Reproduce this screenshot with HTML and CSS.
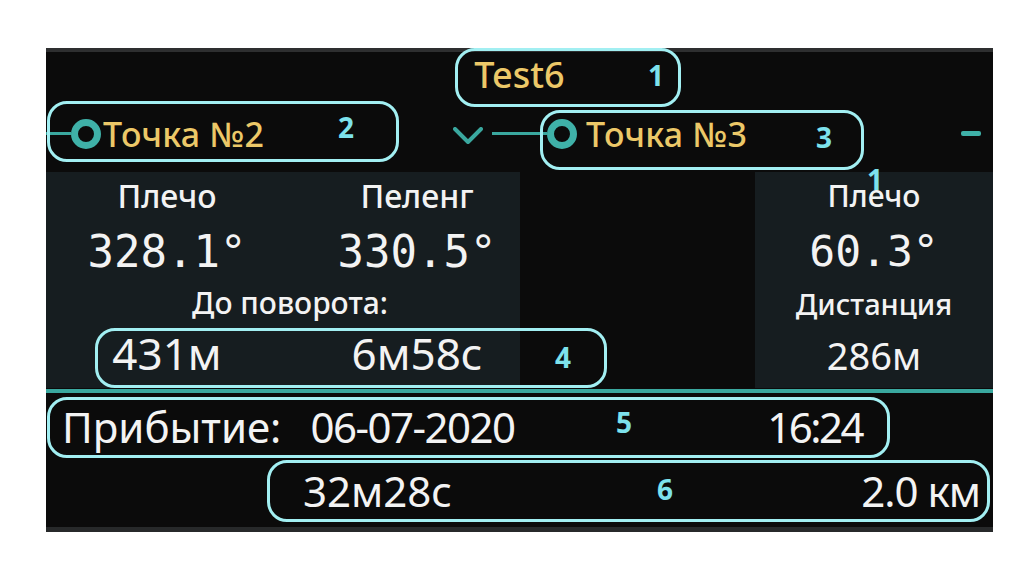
FILE: index.html
```html
<!DOCTYPE html>
<html lang="ru">
<head>
<meta charset="utf-8">
<title>Test6</title>
<link rel="stylesheet" href="styles.css">
</head>
<body>
<div class="stage">
  <div class="panel">
    <div class="title">Test6</div>
    <div class="route">
      <div class="route-left">
        <span class="tail"></span>
        <span class="ring"></span>
        <span class="point">Точка №2</span>
      </div>
      <svg class="chevron" width="30" height="18" viewBox="0 0 30 18"><polyline points="2,2 15,15 28,2" fill="none" stroke="#3aa89f" stroke-width="4" stroke-linecap="round" stroke-linejoin="round"/></svg>
      <span class="link"></span>
      <span class="ring"></span>
      <span class="point point-next">Точка №3</span>
      <span class="dash"></span>
    </div>
    <div class="info">
      <div class="card card-left">
        <div class="label">Плечо</div>
        <div class="label c2">Пеленг</div>
        <div class="deg">328.1°</div>
        <div class="deg c2">330.5°</div>
        <div class="sub">До поворота:</div>
        <div class="big">431м</div>
        <div class="big c2">6м58с</div>
      </div>
      <div class="void"></div>
      <div class="card card-right">
        <div class="label small">Плечо</div>
        <div class="deg small">60.3°</div>
        <div class="sub">Дистанция</div>
        <div class="mid">286м</div>
      </div>
    </div>
    <div class="divider"></div>
    <div class="arrival">
      <span>Прибытие:</span>
      <span class="date">06-07-2020</span>
      <span class="time">16:24</span>
    </div>
    <div class="total">
      <span class="dur">32м28с</span>
      <span class="dist">2.0 км</span>
    </div>
  </div>

  <div class="box b1"></div>
  <div class="box b2"></div>
  <div class="box b3"></div>
  <div class="box b4"></div>
  <div class="box b5"></div>
  <div class="box b6"></div>

  <span class="num n1">1</span>
  <span class="num n2">2</span>
  <span class="num n3">3</span>
  <span class="num n1b">1</span>
  <span class="num n4">4</span>
  <span class="num n5">5</span>
  <span class="num n6">6</span>
</div>
</body>
</html>
```

FILE: styles.css
```css
* { box-sizing: border-box; }

html, body {
  margin: 0;
  padding: 0;
  background: #ffffff;
}

body {
  font-family: "Noto Sans", "Open Sans", sans-serif;
  color: #f3f3f3;
}

.stage {
  position: relative;
  width: 1022px;
  height: 566px;
  padding: 48px 0 0 46px;
  overflow: hidden;
}

.panel {
  width: 947px;
  height: 484px;
  background: #0b0b0b;
  border-top: 4px solid #2e2f30;
  border-bottom: 5px solid #27292a;
  display: flex;
  flex-direction: column;
}

.title {
  padding-top: 3px;
  height: 43px;
  line-height: 40px;
  font-size: 36px;
  font-weight: 500;
  text-align: center;
  color: #ecc868;
}

.route {
  height: 77px;
  display: flex;
  align-items: center;
}

.route-left {
  width: 407px;
  display: flex;
  align-items: center;
}

.tail {
  width: 25px;
  height: 3px;
  background: #3aa89f;
}

.ring {
  width: 30px;
  height: 30px;
  border: 7px solid #3fb1a8;
  border-radius: 50%;
  flex: none;
}

.point {
  margin-left: 2px;
  font-size: 34px;
  font-weight: 500;
  letter-spacing: 0.3px;
  line-height: 40px;
  color: #ecc868;
  white-space: nowrap;
}

.point-next {
  margin-left: 9px;
}

.chevron {
  display: block;
  flex: none;
  margin-top: 4px;
}

.link {
  margin-left: 9px;
  width: 55px;
  height: 3px;
  background: #3aa89f;
}

.dash {
  margin-left: auto;
  margin-right: 12px;
  width: 20px;
  height: 5px;
  border-radius: 2px;
  background: #3fb1a8;
}

.info {
  height: 216px;
  display: flex;
}

.card {
  background: #161d20;
  height: 100%;
}

.card-left {
  width: 474px;
  display: grid;
  grid-template-columns: 242px 232px;
  grid-auto-rows: min-content;
  justify-items: center;
  padding-top: 5px;
}

.card-left .c2 {
  padding-left: 26px;
}

.void {
  flex: 1;
}

.card-right {
  width: 238px;
  display: flex;
  flex-direction: column;
  align-items: center;
  padding-top: 6px;
}

.label {
  font-size: 32px;
  font-weight: 500;
  line-height: 38px;
}

.label.small {
  font-size: 30px;
  line-height: 36px;
}

.deg {
  margin-top: 14px;
  font-family: "DejaVu Sans Mono", "Liberation Mono", monospace;
  font-size: 44px;
  line-height: 46px;
}

.deg.small {
  margin-top: 14px;
  font-size: 43px;
}

.sub {
  grid-column: 1 / 3;
  margin-top: 10px;
  padding-left: 14px;
  font-size: 30px;
  font-weight: 500;
  line-height: 36px;
}

.card-right .sub {
  padding-left: 0;
  font-size: 29px;
  margin-top: 12px;
}

.big {
  margin-top: 8px;
  font-size: 44px;
  line-height: 48px;
}

.mid {
  margin-top: 12px;
  font-size: 38px;
  line-height: 42px;
}

.divider {
  margin-top: 1px;
  height: 4px;
  background: #3aa89f;
}

.arrival {
  height: 67px;
  display: flex;
  padding: 9px 131px 0 16px;
  font-size: 42px;
  line-height: 50px;
}

.date {
  margin-left: 29px;
  letter-spacing: -1.5px;
}

.time {
  margin-left: auto;
  letter-spacing: -2.5px;
}

.total {
  height: 67px;
  display: flex;
  justify-content: space-between;
  padding: 6px 13px 0 257px;
  font-size: 42px;
  line-height: 50px;
}

.dist {
  letter-spacing: -1px;
}

/* annotation overlay */
.box {
  position: absolute;
  border: 3px solid #a2eff2;
  border-radius: 20px;
}

.b1 { left: 455px; top: 48px;  width: 226px; height: 59px; }
.b2 { left: 47px;  top: 101px; width: 352px; height: 61px; }
.b3 { left: 540px; top: 110px; width: 324px; height: 60px; }
.b4 { left: 95px;  top: 328px; width: 512px; height: 60px; }
.b5 { left: 47px;  top: 397px; width: 843px; height: 61px; }
.b6 { left: 267px; top: 460px; width: 723px; height: 62px; }

.num {
  position: absolute;
  font-size: 28px;
  font-weight: 700;
  line-height: 28px;
  color: #7de2ec;
}

.n1  { left: 648px; top: 61px; }
.n2  { left: 338px; top: 113px; }
.n3  { left: 816px; top: 123px; }
.n1b { left: 867px; top: 165px; }
.n4  { left: 555px; top: 343px; }
.n5  { left: 616px; top: 408px; }
.n6  { left: 657px; top: 475px; }
```
